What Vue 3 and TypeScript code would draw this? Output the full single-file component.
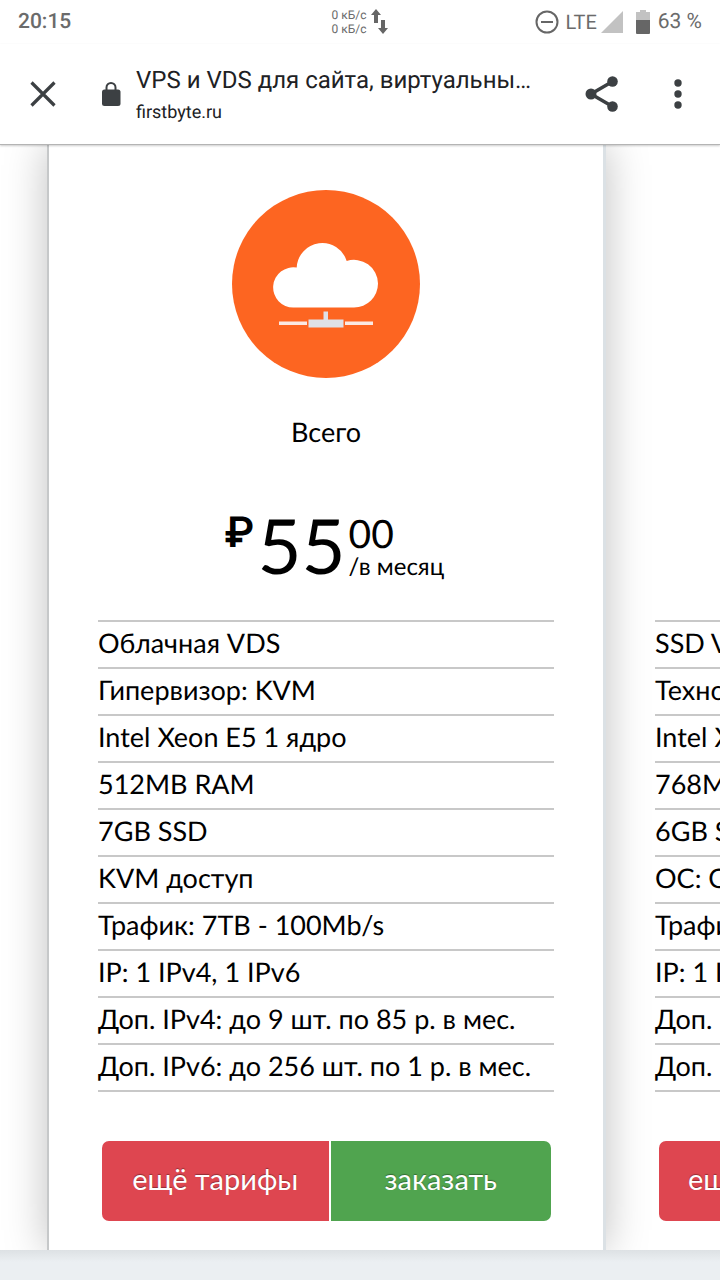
<script setup lang="ts">
interface Plan {
  id: string
  features: string[]
}

const current: Plan = {
  id: 'cloud-vds',
  features: [
    'Облачная VDS',
    'Гипервизор: KVM',
    'Intel Xeon E5 1 ядро',
    '512MB RAM',
    '7GB SSD',
    'KVM доступ',
    'Трафик: 7TB - 100Mb/s',
    'IP: 1 IPv4, 1 IPv6',
    'Доп. IPv4: до 9 шт. по 85 р. в мес.',
    'Доп. IPv6: до 256 шт. по 1 р. в мес.',
  ],
}

const next: Plan = {
  id: 'ssd-vds',
  features: [
    'SSD VDS',
    'Технология: KVM',
    'Intel Xeon E5',
    '768MB RAM',
    '6GB SSD',
    'ОС: ОС Linux',
    'Трафик: 7TB',
    'IP: 1 IPv4',
    'Доп. IPv4',
    'Доп. IPv6',
  ],
}
</script>

<template>
  <div class="screen">
    <div class="status">
      <span class="clock">20:15</span>
      <div class="net">
        <div class="rates"><span>0 кБ/с</span><span>0 кБ/с</span></div>
        <svg width="18" height="26" viewBox="0 0 18 26" aria-hidden="true">
          <path fill="#666" d="M5 0l5 6H7v8H3V6H0zM12 25l-5-6h3v-8h4v8h3z" />
        </svg>
      </div>
      <div class="indicators">
        <svg width="24" height="24" viewBox="0 0 24 24" aria-hidden="true">
          <circle cx="12" cy="12" r="10.5" fill="none" stroke="#666" stroke-width="2" />
          <path stroke="#666" stroke-width="2" d="M6 12h12" />
        </svg>
        <span class="lte">LTE</span>
        <svg class="signal" width="22" height="22" viewBox="0 0 22 22" aria-hidden="true">
          <path fill="#c2c2c2" d="M22 0v22H0z" />
        </svg>
        <svg class="battery" width="14" height="24" viewBox="0 0 14 24" aria-hidden="true">
          <path fill="#c2c2c2" d="M4 0h6v2h4v9H0V2h4z" />
          <path fill="#666" d="M0 10h14v13a1 1 0 0 1-1 1H1a1 1 0 0 1-1-1z" />
        </svg>
        <span class="percent">63 %</span>
      </div>
    </div>

    <header class="toolbar">
      <button class="tool close" type="button" aria-label="Закрыть">
        <svg width="26" height="26" viewBox="0 0 26 26">
          <path stroke="#3c4043" stroke-width="3.2" d="M1.500 1.500l23 23M24.500 1.500l-23 23" />
        </svg>
      </button>
      <svg class="lock" width="20" height="24" viewBox="0 0 20 24" aria-hidden="true">
        <rect x="1" y="7.500" width="18.500" height="16.500" rx="2.500" fill="#3c4043" />
        <path fill="none" stroke="#3c4043" stroke-width="2" d="M5.500 9V5.500a4.500 4.500 0 0 1 9 0V9" />
      </svg>
      <div class="page">
        <span class="title">VPS и VDS для сайта, виртуальны…</span>
        <span class="host">firstbyte.ru</span>
      </div>
      <button class="tool share" type="button" aria-label="Поделиться">
        <svg width="34" height="36" viewBox="0 0 34 36">
          <path fill="none" stroke="#3c4043" stroke-width="3.500" d="M27.500 5.500L6 18l21.500 12.500" />
          <g fill="#3c4043">
            <circle cx="27.500" cy="5.500" r="5.300" />
            <circle cx="6" cy="18" r="5.500" />
            <circle cx="27.500" cy="30.500" r="5.300" />
          </g>
        </svg>
      </button>
      <button class="tool more" type="button" aria-label="Меню">
        <svg width="8" height="30" viewBox="0 0 8 30">
          <g fill="#3c4043">
            <circle cx="4" cy="4" r="3.700" />
            <circle cx="4" cy="15" r="3.700" />
            <circle cx="4" cy="26" r="3.700" />
          </g>
        </svg>
      </button>
    </header>

    <main class="carousel">
      <article class="card">
        <svg class="emblem" width="188" height="188" viewBox="0 0 188 188" aria-hidden="true">
          <circle cx="94" cy="94" r="94" fill="#fd6521" />
          <path
            fill="#fff"
            d="M61.500 117.500A20.100 20.100 0 1 1 64.700 77.600A25.600 25.600 0 0 1 114.700 71A24 24 0 0 1 146 93.500A24 24 0 0 1 122 117.500z"
          />
          <path fill="#fbe9e3" d="M47 131.500h28v3.500H47zM113 131.500h28v3.500h-28z" />
          <path fill="#dfe0e6" d="M91.500 121.500h4.500v8h15.500v8h-35v-8h15z" />
        </svg>
        <h2>Всего</h2>
        <div class="price">
          <span class="currency">₽</span>
          <span class="amount">55</span>
          <div class="rest">
            <span class="cents">00</span>
            <span class="period">/в месяц</span>
          </div>
        </div>
        <ul>
          <li v-for="f in current.features" :key="f">{{ f }}</li>
        </ul>
        <div class="actions">
          <button class="btn other" type="button">ещё тарифы</button>
          <button class="btn order" type="button">заказать</button>
        </div>
      </article>
      <article class="peek">
        <ul>
          <li v-for="f in next.features" :key="f">{{ f }}</li>
        </ul>
        <div class="actions">
          <button class="btn other" type="button">ещё тарифы</button>
        </div>
      </article>
    </main>
    <footer></footer>
  </div>
</template>

<style>
body {
  background: #fff;
}
</style>

<style scoped>
.screen {
  min-height: 100vh;
  display: flex;
  flex-direction: column;
  overflow: hidden;
  background: #fff;
  font-family: Roboto, sans-serif;
  text-rendering: geometricPrecision;
}
.status {
  height: 44px;
  padding: 0 18px;
  display: grid;
  grid-template-columns: 1fr auto 1fr;
  align-items: center;
  color: #6b6b6b;
}
.clock {
  font-size: 21px;
  font-weight: 500;
}
.net {
  display: flex;
  align-items: center;
  gap: 4px;
}
.rates {
  display: flex;
  flex-direction: column;
  font-size: 12px;
  line-height: 14px;
}
.indicators {
  display: flex;
  align-items: center;
  justify-content: flex-end;
}
.lte {
  margin-left: 6px;
  font-size: 20px;
  line-height: 24px;
}
.signal {
  margin-left: 4px;
}
.battery {
  margin: 0 8px 0 13px;
}
.percent {
  font-size: 21px;
}
.toolbar {
  position: relative;
  z-index: 2;
  height: 100px;
  padding: 0 28px 0 30px;
  display: flex;
  align-items: center;
  background: #fff;
  border-bottom: 1px solid #b4b4b4;
  box-shadow: 0 1px 2px rgba(0, 0, 0, 0.2);
}
.tool {
  padding: 0;
  border: 0;
  background: none;
  display: flex;
  flex: none;
}
.lock {
  flex: none;
  margin: 0 15px 0 45px;
}
.page {
  flex: 1;
  min-width: 0;
  display: flex;
  flex-direction: column;
  gap: 7px;
  color: #202124;
}
.title {
  font-size: 24px;
  line-height: 30px;
  white-space: nowrap;
}
.host {
  font-size: 18px;
  line-height: 22px;
}
.more {
  margin: 0 10px 0 55px;
}
.carousel {
  flex: none;
  display: grid;
  grid-template-columns: 47px minmax(0, 1fr) 114px;
  overflow: hidden;
  font-family: Lato, sans-serif;
  color: #000;
}
.card {
  grid-column: 2;
  display: flex;
  flex-direction: column;
  padding: 45px 49px 29px;
  background: #fff;
  border-left: 2px solid #c6c8c9;
  border-right: 3px solid #dbe1e5;
  box-shadow: 0 0 40px rgba(0, 0, 0, 0.25);
}
.emblem {
  align-self: center;
}
h2 {
  margin: 37px 0 57px;
  font-size: 27px;
  line-height: 34px;
  font-weight: 400;
  text-align: center;
}
.price {
  height: 82px;
  padding-left: 16px;
  display: flex;
  justify-content: center;
}
.currency {
  font-family: Inter, sans-serif;
  font-size: 42px;
  line-height: 54px;
  font-weight: 600;
}
.amount {
  margin: 0 3px;
  font-size: 76px;
  line-height: 80px;
}
.rest {
  display: flex;
  flex-direction: column;
}
.cents {
  font-size: 39px;
  line-height: 56px;
}
.period {
  font-size: 24px;
  line-height: 10px;
}
ul {
  margin: 32px 0 0;
  padding: 0;
  list-style: none;
  border-top: 2px solid #c8c8c8;
}
li {
  height: 45px;
  border-bottom: 2px solid #c8c8c8;
  font-size: 27px;
  line-height: 41px;
  white-space: nowrap;
}
.actions {
  margin: 49px 3px 0 4px;
  display: flex;
  gap: 2px;
}
.btn {
  flex: 221 1 0;
  height: 80px;
  padding: 0 0 4px;
  border: 0;
  color: #fff;
  font-family: Lato, sans-serif;
  font-size: 29px;
  line-height: 36px;
  white-space: nowrap;
  text-shadow: 0 -1px 1px rgba(0, 0, 0, 0.35);
}
.other {
  flex-grow: 227;
  border-radius: 7px 0 0 7px;
  background: #de4650;
}
.order {
  border-radius: 0 7px 7px 0;
  background: #50a44f;
}
.peek {
  padding: 0 0 29px 49px;
  overflow: hidden;
  display: flex;
  flex-direction: column;
  justify-content: flex-end;
}
.peek .btn {
  flex: none;
  padding: 0 29px 4px;
}
footer {
  position: relative;
  flex: 1;
  min-height: 28px;
  background: linear-gradient(#dde1e4, #ebeff2 12px);
}
</style>
